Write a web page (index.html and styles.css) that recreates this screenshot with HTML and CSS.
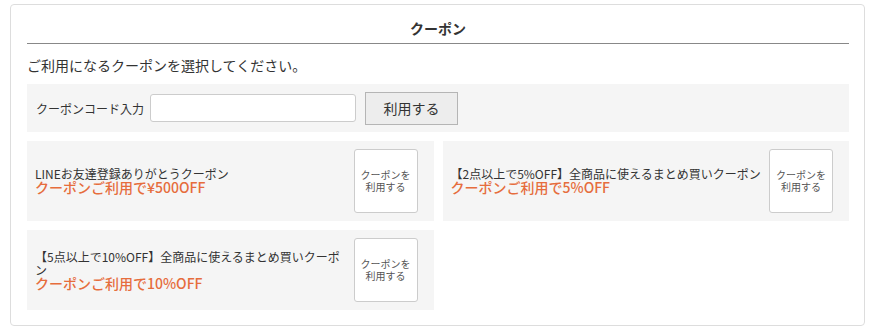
FILE: index.html
```html
<!DOCTYPE html>
<html lang="ja">
<head>
<meta charset="utf-8">
<title>クーポン</title>
<link rel="stylesheet" href="styles.css">
</head>
<body>
<div class="panel">
  <div class="panel-title">クーポン</div>
  <p class="intro">ご利用になるクーポンを選択してください。</p>
  <div class="code-row">
    <label class="code-label" for="code">クーポンコード入力</label>
    <input class="code-input" id="code" type="text">
    <button class="code-btn" type="button">利用する</button>
  </div>
  <div class="coupons">
    <div class="coupon">
      <div class="coupon-text">
        <div class="coupon-name">LINEお友達登録ありがとうクーポン</div>
        <div class="coupon-off">クーポンご利用で¥500OFF</div>
      </div>
      <button class="coupon-btn" type="button">クーポンを<br>利用する</button>
    </div>
    <div class="coupon">
      <div class="coupon-text">
        <div class="coupon-name">【2点以上で5%OFF】全商品に使えるまとめ買いクーポン</div>
        <div class="coupon-off">クーポンご利用で5%OFF</div>
      </div>
      <button class="coupon-btn" type="button">クーポンを<br>利用する</button>
    </div>
    <div class="coupon">
      <div class="coupon-text">
        <div class="coupon-name">【5点以上で10%OFF】全商品に使えるまとめ買いクーポン</div>
        <div class="coupon-off">クーポンご利用で10%OFF</div>
      </div>
      <button class="coupon-btn" type="button">クーポンを<br>利用する</button>
    </div>
  </div>
</div>
</body>
</html>
```
FILE: styles.css
```css
* { box-sizing: border-box; }
html, body { background: #fff; }
body {
  margin: 4px 10px 0 10px;
  font-family: "Noto Sans CJK JP", "Noto Sans", sans-serif;
  color: #333;
}
.panel {
  border: 1px solid #ddd;
  border-radius: 4px;
  padding: 0 15px 15px 16px;
}
.panel-title {
  height: 39px;
  padding-top: 13px;
  font-size: 14px;
  line-height: 20px;
  font-weight: bold;
  text-align: center;
  border-bottom: 1px solid #888;
}
.intro {
  margin: 11px 0 9px;
  font-size: 14px;
  line-height: 20px;
}
.code-row {
  display: flex;
  align-items: center;
  height: 48px;
  padding: 0 9px;
  background: #f5f5f5;
}
.code-label {
  font-size: 12px;
  width: 114px;
}
.code-input {
  width: 206px;
  height: 28px;
  border: 1px solid #ccc;
  border-radius: 3px;
  background: #fff;
  margin: 0;
}
.code-btn {
  margin-left: 9px;
  width: 93px;
  height: 33px;
  background: #ededed;
  border: 1px solid #b5b5b5;
  font-family: inherit;
  font-size: 14px;
  color: #333;
  padding: 0;
}
.coupons {
  margin-top: 9px;
  display: grid;
  grid-template-columns: 1fr 1fr;
  gap: 9px;
}
.coupon {
  display: flex;
  align-items: center;
  height: 80px;
  padding: 0 16px 0 8px;
  background: #f5f5f5;
}
.coupon-text {
  flex: 1;
  min-width: 0;
  margin-right: 8px;
}
.coupon-name {
  font-size: 12px;
  line-height: 13px;
  color: #333;
}
.coupon-off {
  font-size: 14px;
  line-height: 15px;
  font-weight: 500;
  color: #e66d3d;
}
.coupon-btn {
  flex: none;
  width: 64px;
  height: 64px;
  background: #fff;
  border: 1px solid #ccc;
  border-radius: 3px;
  font-family: inherit;
  font-size: 10px;
  line-height: 12px;
  color: #555;
  padding: 0;
}
```
